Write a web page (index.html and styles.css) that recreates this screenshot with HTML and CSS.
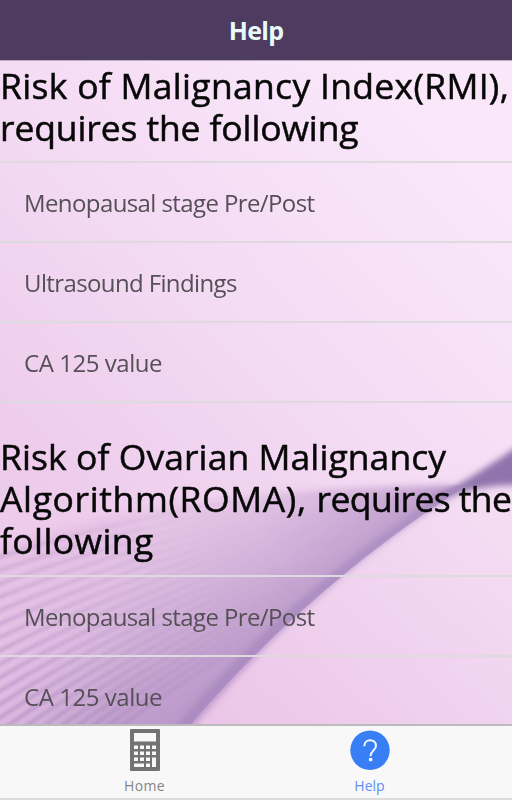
FILE: index.html
```
<!DOCTYPE html>
<html lang="en">
<head>
<meta charset="utf-8">
<title>Help</title>
<link rel="stylesheet" href="styles.css">
</head>
<body>
<div class="app">
  <header class="header"><h1>Help</h1></header>
  <main class="content">
    <svg class="backdrop" viewBox="0 0 512 664" preserveAspectRatio="none" aria-hidden="true">
      <defs>
        <linearGradient id="base" gradientUnits="userSpaceOnUse" x1="0" y1="390" x2="390" y2="0">
          <stop offset="0" stop-color="#edcbeb"/><stop offset=".5" stop-color="#f4dcf4"/><stop offset="1" stop-color="#fae8fa"/>
        </linearGradient>
        <linearGradient id="low" gradientUnits="userSpaceOnUse" x1="220" y1="664" x2="440" y2="425">
          <stop offset="0" stop-color="#ebc6e8"/><stop offset="1" stop-color="#f4dcf3"/>
        </linearGradient>
        <linearGradient id="wing" gradientUnits="userSpaceOnUse" x1="110" y1="400" x2="240" y2="610">
          <stop offset="0" stop-color="#e3bfe3" stop-opacity="0"/><stop offset=".35" stop-color="#e2c3e4" stop-opacity=".75"/><stop offset=".8" stop-color="#c9a8d3"/><stop offset="1" stop-color="#bd9acb"/>
        </linearGradient>
        <linearGradient id="leftGlow" gradientUnits="userSpaceOnUse" x1="0" y1="540" x2="130" y2="600">
          <stop offset="0" stop-color="#e6c1e5" stop-opacity=".9"/><stop offset="1" stop-color="#e0b8e2" stop-opacity="0"/>
        </linearGradient>
        <linearGradient id="tail" gradientUnits="userSpaceOnUse" x1="250" y1="0" x2="470" y2="0">
          <stop offset="0" stop-color="#a283bd" stop-opacity="0"/><stop offset=".75" stop-color="#a283bd" stop-opacity=".3"/><stop offset="1" stop-color="#9477af"/>
        </linearGradient>
        <linearGradient id="fade" gradientUnits="userSpaceOnUse" x1="0" y1="664" x2="230" y2="450">
          <stop offset="0" stop-color="#9474b0" stop-opacity=".42"/><stop offset=".4" stop-color="#9474b0" stop-opacity=".22"/><stop offset="1" stop-color="#9474b0" stop-opacity="0"/>
        </linearGradient>
        <filter id="soft" x="-20%" y="-20%" width="140%" height="140%"><feGaussianBlur stdDeviation="3"/></filter>
        <filter id="fine" x="-20%" y="-20%" width="140%" height="140%"><feGaussianBlur stdDeviation="1.5"/></filter>
        <clipPath id="ribbon"><path d="M0 450Q210 420 467 425C378 482 282 558 191 664H0Z"/></clipPath>
      </defs>
      <rect width="512" height="664" fill="url(#base)"/>
      <path d="M190 664Q315 490 470 427L512 424V664Z" fill="url(#low)"/>
      <g filter="url(#soft)">
        <path d="M-20 490C100 448 280 424 467 425C378 482 282 558 187 675H-20Z" fill="url(#wing)"/>
        <path d="M-20 490L140 448V675H-20Z" fill="url(#leftGlow)"/>
        <path d="M250 470C320 442 400 429 472 425C425 455 362 492 292 556Z" fill="url(#tail)" opacity=".5"/>
        <path d="M430 442C475 414 510 393 530 376V425Q480 422 430 442Z" fill="#8f73ac"/>
      </g>
      <g clip-path="url(#ribbon)">
        <path d="M474 424C373 486 273 565 179 676" fill="none" stroke="#a486bd" stroke-width="18" opacity=".75" filter="url(#soft)"/>
        <g class="strands" filter="url(#fine)" stroke="url(#fade)">
          <path d="M-20 503Q130 454 300 432"/><path d="M-20 517Q130 463 300 438"/><path d="M-20 531Q130 473 300 444"/>
          <path d="M-20 545Q130 482 300 450"/><path d="M-20 559Q130 492 300 456"/><path d="M-20 573Q130 501 300 462"/>
          <path d="M-20 587Q130 511 300 468"/><path d="M-20 601Q130 520 300 474"/><path d="M-20 615Q130 530 300 480"/>
          <path d="M-20 629Q130 539 300 486"/><path d="M-20 643Q130 549 300 492"/><path d="M-20 657Q130 558 300 498"/>
          <path d="M-20 671Q130 568 300 504"/><path d="M-20 685Q130 577 300 510"/><path d="M-20 699Q130 587 300 516"/>
          <path d="M-20 713Q130 596 300 522"/><path d="M-20 727Q130 606 300 528"/><path d="M-20 741Q130 615 300 534"/>
          <path d="M-20 755Q130 625 300 540"/><path d="M-20 769Q130 634 300 546"/><path d="M-20 783Q130 644 300 552"/>
        </g>
      </g>
    </svg>
    <section class="group">
      <h2><span class="l1">Risk of Malignancy Index(RMI),</span> <span class="l2">requires the following</span></h2>
      <ul><li><span class="meno">Menopausal stage Pre/Post</span></li><li><span class="ultra">Ultrasound Findings</span></li><li><span class="ca">CA 125 value</span></li></ul>
    </section>
    <section class="group second">
      <h2><span class="l3">Risk of Ovarian Malignancy</span> <span class="l4"><b>Algorithm(ROMA), </b>requires the</span> <span class="l5">following</span></h2>
      <ul><li><span class="meno">Menopausal stage Pre/Post</span></li><li><span class="ca">CA 125 value</span></li></ul>
    </section>
  </main>
  <nav class="tabs">
    <a class="tab home">
      <svg width="30" height="42" viewBox="0 0 30 42" aria-hidden="true"><path fill="#737373" fill-rule="evenodd" d="M1 0H29Q30 0 30 1V41Q30 42 29 42H1Q0 42 0 41V1Q0 0 1 0ZM4 4V12.5H26V4ZM4 16.5v3.5h4v-3.5ZM10 16.5v3.5h4v-3.5ZM16 16.5v3.5h4v-3.5ZM22 16.5v3.5h4v-3.5ZM4 22.5v3.5h4v-3.5ZM10 22.5v3.5h4v-3.5ZM16 22.5v3.5h4v-3.5ZM22 22.5v3.5h4v-3.5ZM4 28.5v3.5h4v-3.5ZM10 28.5v3.5h4v-3.5ZM16 28.5v3.5h4v-3.5ZM22 28.5v9.5h4v-9.5ZM4 34.5v3.5h10v-3.5ZM16 34.5v3.5h4v-3.5Z"/></svg>
      <span>Home</span>
    </a>
    <a class="tab help">
      <svg width="40" height="42" viewBox="0 0 40 42" aria-hidden="true"><circle cx="20" cy="21.3" r="19.7" fill="#387ef5"/><path d="M14.3 17.3C14.3 9.1 26 9.5 26 16.7C26 21.5 20.5 21.6 20.5 27.3" fill="none" stroke="#f8f8f8" stroke-width="2"/><rect x="18.9" y="29" width="3.4" height="3.2" rx=".7" fill="#f8f8f8"/></svg>
      <span>Help</span>
    </a>
  </nav>
</div>
</body>
</html>
```
FILE: styles.css
```
* { box-sizing: border-box; }
body { margin: 0; font-family: "Open Sans", "Noto Sans", sans-serif; }
.app { width: 512px; height: 800px; display: flex; flex-direction: column; overflow: hidden; }
.header { height: 61px; flex: none; background: #4d3b60; border-bottom: 1px solid #b9adbe; text-align: center; }
.header h1 { margin: 0; font-size: 25px; line-height: 60px; font-weight: 700; letter-spacing: -.7px; color: #e8fafa; }
.content { position: relative; flex: 1; overflow: hidden; isolation: isolate; }
.backdrop { position: absolute; inset: 0; width: 100%; height: 100%; z-index: -1; }
.strands { fill: none; stroke-width: 4; }
.group { padding-top: 3px; }
.group.second { padding-top: 32px; }
h2 { margin: 0; font-size: 35.5px; line-height: 42px; font-weight: 500; color: #080808; white-space: nowrap; -webkit-text-stroke: .5px #080808; }
h2 span { display: block; }
h2 b { font-weight: inherit; letter-spacing: .62px; }
.l1 { letter-spacing: .3px; }
.l2 { letter-spacing: -.12px; }
.l3 { letter-spacing: .07px; }
.l4 { letter-spacing: -.6px; }
.l5 { letter-spacing: .4px; }
ul { list-style: none; margin: 13px 0 0; padding: 0; border-top: 2px solid #dedbe0; }
.second ul { margin-top: 14px; }
li { height: 80px; padding: 1px 0 0 24px; border-bottom: 2px solid #dedbe0; font-size: 24px; line-height: 78px; color: #555056; white-space: nowrap; }
.meno { letter-spacing: -.6px; }
.ultra { letter-spacing: -.62px; }
.ca { letter-spacing: -.45px; }
.tabs { height: 76px; flex: none; display: flex; padding: 0 30px 0 32px; background: #f8f8f8; border-top: 2px solid #bcbabd; border-bottom: 2px solid #dddddd; }
.tab { flex: 1; display: flex; flex-direction: column; align-items: center; padding-top: 3px; font-size: 14px; line-height: 26px; color: #858585; }
.home { letter-spacing: .3px; }
.help { color: #5d8ff4; }
.tab svg { display: block; flex: none; }
.tab span { padding-top: 2px; }
```
